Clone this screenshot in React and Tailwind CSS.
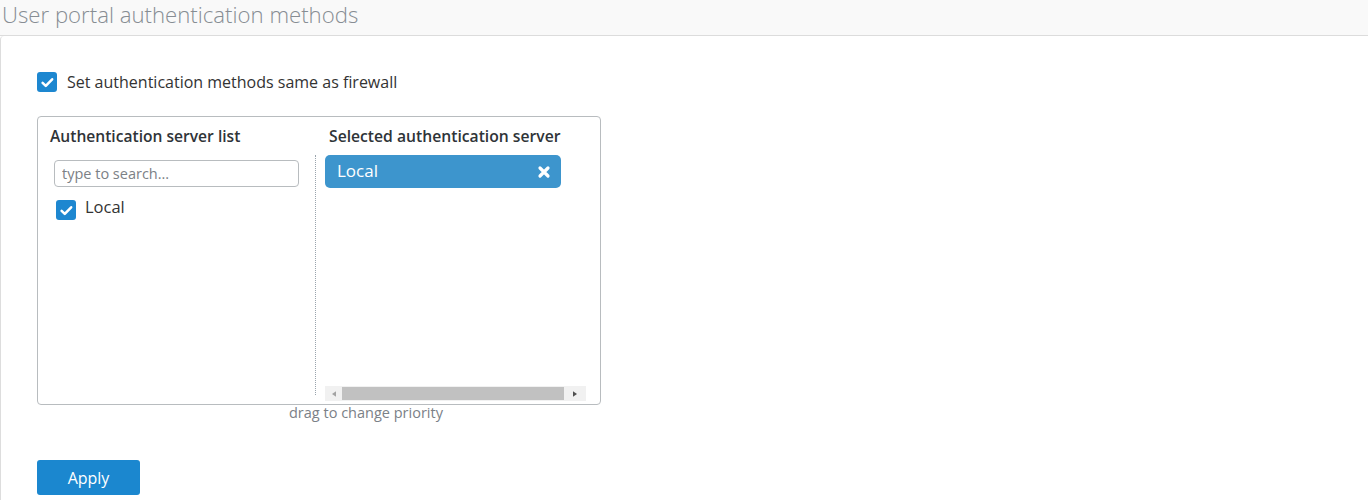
import React from "react";

function CheckBox({ className = "" }) {
  return (
    <span className={`inline-flex items-center justify-center w-5 h-5 rounded-[3px] bg-[#1d87d0] ${className}`}>
      <svg viewBox="0 0 20 20" className="w-[15px] h-[15px]">
        <path d="M3.5 10.5l4.2 4 8.5-8.8" fill="none" stroke="#fff" strokeWidth="3.4" strokeLinecap="round" strokeLinejoin="round" />
      </svg>
    </span>
  );
}

export default function App() {
  return (
    <main className="w-[1368px] h-[500px] bg-white overflow-hidden font-['Open_Sans',sans-serif]">
      {/* HEADER */}
      <div className="h-[36px] bg-[#f9f9f9] border-b border-[#dcdcdc] pl-[2px]">
        <h1 className="text-[22.2px] leading-[29px] font-light text-[#878d93]">User portal authentication methods</h1>
      </div>

      {/* PANEL */}
      <section className="border-l border-[#dddddd] rounded-tl-[4px] h-[464px] pl-[36px] pt-[36px]">
        <label className="flex items-center gap-[10px] h-[20px]">
          <CheckBox />
          <span className="text-[16px] text-[#333]">Set authentication methods same as firewall</span>
        </label>

        <div className="mt-[24px] w-[564px] h-[289px] border border-[#b8bcbf] rounded-[4px] flex">
          {/* left column */}
          <div className="w-[277px] pl-[12px] pt-[9px] pr-[15px]">
            <div className="text-[15.6px] font-semibold text-[#2f3438] leading-[20px]">Authentication server list</div>
            <input
              type="text"
              placeholder="type to search..."
              className="mt-[14px] ml-[4px] w-[245px] h-[27px] border border-[#b8bcbf] rounded-[4px] px-[7px] text-[14.5px] text-[#333] placeholder:text-[#7c8186] outline-none"
            />
            <label className="flex items-center gap-[9px] mt-[13px] ml-[6px]">
              <CheckBox />
              <span className="text-[16.5px] text-[#333] -mt-[6px]">Local</span>
            </label>
          </div>

          {/* right column */}
          <div className="flex-1 flex flex-col pt-[9px] pr-[14px]">
            <div className="text-[15.7px] font-semibold text-[#2f3438] leading-[20px] pl-[14px]">Selected authentication server</div>
            <div className="flex flex-1 mt-[9px] mb-[3px]">
              <div className="border-l border-dotted border-[#9aa4ad] w-0 mb-[6px]" />
              <div className="flex-1 flex flex-col pl-[9px]">
                <div className="w-[236px] h-[33px] rounded-[5px] bg-[#3d95cd] flex items-center justify-between pl-[12px] pr-[10px]">
                  <span className="text-[17px] text-white -mt-[2px]">Local</span>
                  <svg viewBox="0 0 14 14" className="w-[14px] h-[14px]">
                    <path d="M3 3l8 8M11 3l-8 8" stroke="#fff" strokeWidth="3.2" strokeLinecap="round" />
                  </svg>
                </div>
                <div className="flex-1" />
                <div className="h-[15px] bg-[#f1f1f1] flex items-center">
                  <div className="w-[17px] flex justify-center">
                    <svg viewBox="0 0 6 8" className="w-[4px] h-[6px]"><path d="M6 0L0 4l6 4z" fill="#a3a3a3" /></svg>
                  </div>
                  <div className="h-[13px] w-[222px] bg-[#c1c1c1]" />
                  <div className="flex-1 flex justify-center">
                    <svg viewBox="0 0 6 8" className="w-[4px] h-[6px]"><path d="M0 0l6 4-6 4z" fill="#505050" /></svg>
                  </div>
                </div>
              </div>
            </div>
          </div>
        </div>

        <div className="text-[14.5px] text-[#7b8187] -mt-[1px] leading-[18px] pl-[252px]">drag to change priority</div>

        <button className="mt-[38px] w-[103px] h-[35px] rounded-[3px] bg-[#1b87cf] text-white text-[16px]">Apply</button>
      </section>
    </main>
  );
}
